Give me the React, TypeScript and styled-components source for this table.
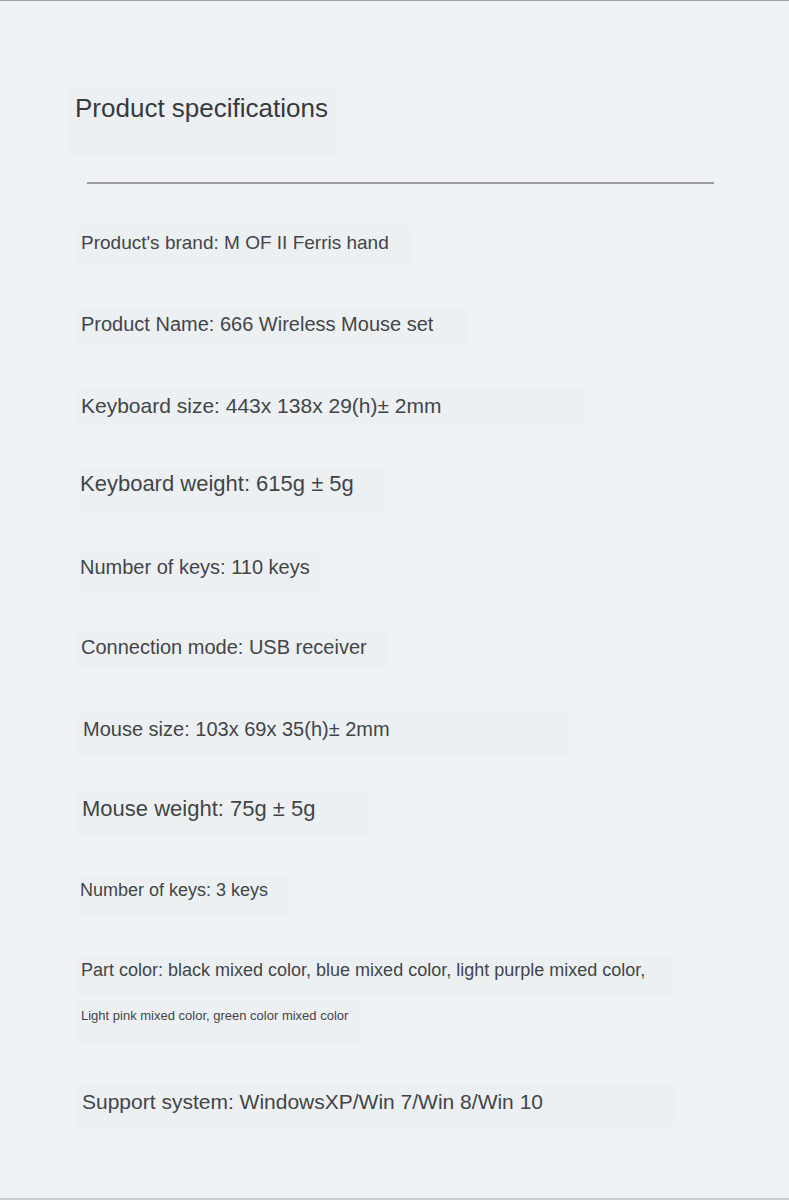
import styled, { createGlobalStyle } from "styled-components";

const GlobalStyle = createGlobalStyle`
  html, body {
    margin: 0;
    padding: 0;
    background: #eef2f5;
  }
  * {
    box-sizing: border-box;
  }
`;

type Spec = {
  text: string;
  top: number;
  left: number;
  width: number;
  height: number;
  size: number;
  pt: number;
};

const specs: Spec[] = [
  { text: "Product's brand: M OF II Ferris hand", top: 41, left: 75, width: 336, height: 45, size: 19, pt: 6 },
  { text: "Product Name: 666 Wireless Mouse set", top: 37, left: 75, width: 393, height: 43, size: 20, pt: 5 },
  { text: "Keyboard size: 443x 138x 29(h)± 2mm", top: 38, left: 75, width: 510, height: 42, size: 21, pt: 5 },
  { text: "Keyboard weight: 615g ± 5g", top: 38, left: 74, width: 311, height: 43, size: 22, pt: 3 },
  { text: "Number of keys: 110 keys", top: 41, left: 74, width: 246, height: 40, size: 20, pt: 3 },
  { text: "Connection mode: USB receiver", top: 38, left: 75, width: 312, height: 38, size: 20, pt: 5 },
  { text: "Mouse size: 103x 69x 35(h)± 2mm", top: 45, left: 77, width: 491, height: 42, size: 20, pt: 4 },
  { text: "Mouse weight: 75g ± 5g", top: 37, left: 76, width: 293, height: 43, size: 22, pt: 4 },
  { text: "Number of keys: 3 keys", top: 41, left: 74, width: 214, height: 41, size: 18, pt: 3 },
  {
    text: "Part color: black mixed color, blue mixed color, light purple mixed color,",
    top: 38,
    left: 75,
    width: 598,
    height: 42,
    size: 18,
    pt: 4,
  },
  { text: "Light pink mixed color, green color mixed color", top: 3, left: 75, width: 287, height: 45, size: 13, pt: 8 },
  { text: "Support system: WindowsXP/Win 7/Win 8/Win 10", top: 40, left: 76, width: 599, height: 42, size: 21, pt: 4 },
];

function App() {
  return (
    <Page>
      <GlobalStyle />
      <TitleBox>
        <h1>Product specifications</h1>
      </TitleBox>
      <Divider />
      {specs.map((s, i) => (
        <SpecBox
          key={i}
          $top={s.top}
          $left={s.left}
          $width={s.width}
          $height={s.height}
          $size={s.size}
          $pt={s.pt}
        >
          {s.text}
        </SpecBox>
      ))}
    </Page>
  );
}

export default App;

const Page = styled.main`
  width: 789px;
  height: 1200px;
  background: #eef2f5;
  border-top: 1px solid #9ea2ad;
  border-bottom: 2px solid #c9ccd3;
  padding-top: 87px;
  display: flex;
  flex-direction: column;
  align-items: flex-start;
  font-family: "Liberation Sans", Arial, sans-serif;
  color: #424548;
  overflow: hidden;
`;

const TitleBox = styled.div`
  margin-left: 68px;
  width: 269px;
  height: 69px;
  padding: 5px 0 0 7px;
  background: #ecf0f3;
  h1 {
    margin: 0;
    font-size: 26px;
    font-weight: 400;
    line-height: 30px;
    color: #37393c;
  }
`;

const Divider = styled.div`
  margin-top: 25px;
  margin-left: 87px;
  width: 627px;
  height: 2px;
  background: #9a9c9f;
`;

const SpecBox = styled.div<{
  $top: number;
  $left: number;
  $width: number;
  $height: number;
  $size: number;
  $pt: number;
}>`
  margin-top: ${(p) => p.$top}px;
  margin-left: ${(p) => p.$left}px;
  width: ${(p) => p.$width}px;
  height: ${(p) => p.$height}px;
  padding: ${(p) => p.$pt}px 0 0 6px;
  background: #ecf0f3;
  font-size: ${(p) => p.$size}px;
  line-height: ${(p) => Math.round(p.$size * 1.2)}px;
  white-space: nowrap;
`;
